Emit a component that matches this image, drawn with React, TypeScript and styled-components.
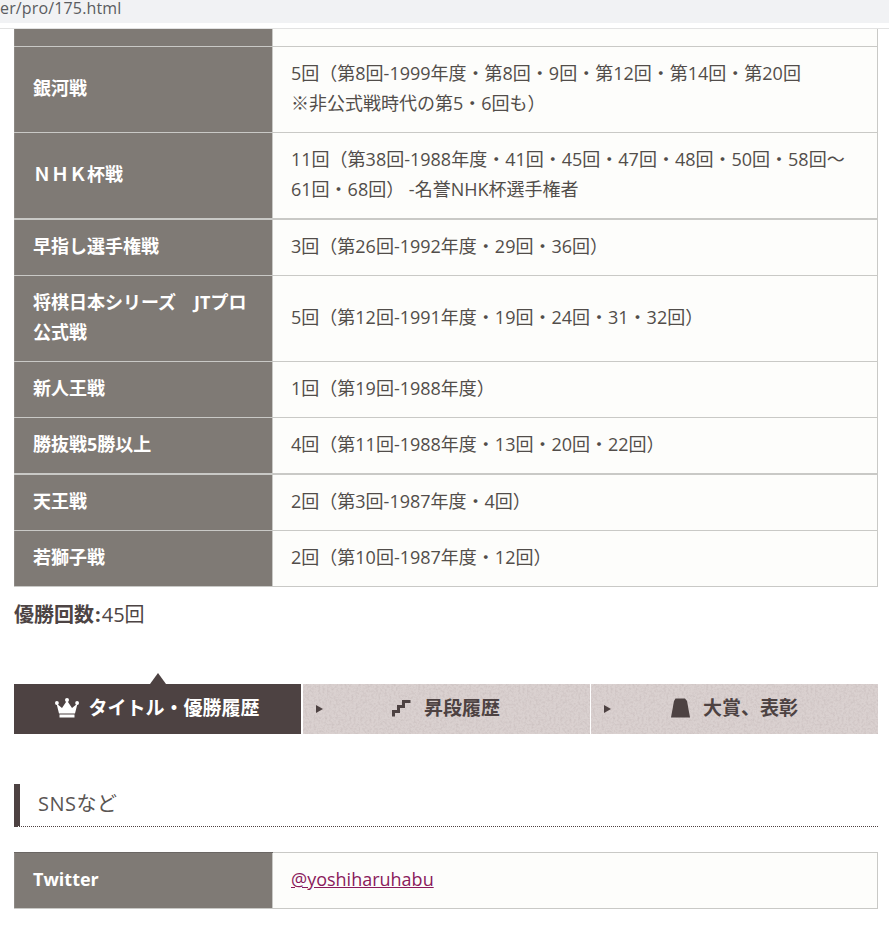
import React from "react";
import styled, { createGlobalStyle } from "styled-components";

const Global = createGlobalStyle`
  html, body { margin: 0; padding: 0; background: #fff; }
  body {
    font-family: "Open Sans", "Noto Sans CJK JP", sans-serif;
    color: #4d4444;
    overflow: hidden;
  }
`;

const Page = styled.div`
  width: 892px;
  height: 932px;
  overflow: hidden;
`;

const AddressBar = styled.div`
  width: 889px;
  height: 23px;
  background: #f1f2f4;
  color: #5a5c60;
  font-family: "Open Sans", sans-serif;
  font-size: 16px;
  letter-spacing: 0.15px;
  line-height: 16px;
  white-space: nowrap;
  margin-bottom: 5px;
`;

const Content = styled.main`
  width: 889px;
  box-sizing: border-box;
  border-top: 1px solid #e2e2e2;
  padding: 0 11px 0 14px;
`;

const Table = styled.table`
  width: 864px;
  border-collapse: collapse;
  table-layout: fixed;
  font-size: 18px;
  line-height: 30px;
`;

const Row = styled.tr<{ $thick?: boolean }>`
  & > th, & > td {
    border-top: ${(p) => (p.$thick ? "2px" : "1px")} solid #c9c9c6;
  }
`;

const Head = styled.th`
  width: 258px;
  box-sizing: border-box;
  background: #7f7a75;
  color: #fff;
  font-weight: 700;
  text-align: left;
  padding: 11px 18px 14px;
  border-left: 1px solid #8d8985;
  border-bottom: 1px solid #c9c9c6;
`;

const Cell = styled.td`
  background: #fdfdfb;
  color: #524d4a;
  padding: 11px 18px 14px;
  border-right: 1px solid #c9c9c6;
  border-bottom: 1px solid #c9c9c6;
  border-left: 1px solid #c9c9c6;
`;

const StubHead = styled(Head)`
  padding: 0;
  height: 17px;
  line-height: 1px;
`;

const StubCell = styled(Cell)`
  padding: 0;
  height: 17px;
  line-height: 1px;
`;

const Total = styled.p`
  margin: 13px 0 0;
  font-size: 20px;
  line-height: 30px;
  color: #4d4444;
`;

const TotalLabel = styled.strong`
  font-weight: 700;
`;

const TotalColon = styled.span`
  font-weight: 700;
  margin: 0 1px;
`;

const Tabs = styled.nav`
  display: grid;
  grid-template-columns: 287px 287px 287px;
  column-gap: 1.5px;
  margin-top: 54px;
  height: 50px;
  width: 864px;
`;

const texture = `url("data:image/svg+xml,%3Csvg xmlns='http://www.w3.org/2000/svg' width='200' height='200'%3E%3Cfilter id='n'%3E%3CfeTurbulence type='fractalNoise' baseFrequency='0.45' numOctaves='3' seed='4'/%3E%3CfeColorMatrix values='0 0 0 0 0.45 0 0 0 0 0.38 0 0 0 0 0.38 0 0 0 0.7 -0.27'/%3E%3C/filter%3E%3Crect width='200' height='200' filter='url(%23n)'/%3E%3C/svg%3E")`;

const Tab = styled.a<{ $active?: boolean }>`
  position: relative;
  display: flex;
  align-items: center;
  justify-content: center;
  gap: ${(p) => (p.$active ? "9px" : "13px")};
  font-size: 19px;
  font-weight: 700;
  line-height: 46px;
  padding-bottom: 2px;
  box-sizing: border-box;
  color: ${(p) => (p.$active ? "#fff" : "#4d4242")};
  background-color: ${(p) => (p.$active ? "#4d4242" : "#dad1d0")};
  background-image: ${(p) => (p.$active ? "none" : texture)};
`;

const ActivePointer = styled.span`
  position: absolute;
  top: -11px;
  left: 50%;
  margin-left: -8px;
  width: 0;
  height: 0;
  border-left: 8px solid transparent;
  border-right: 8px solid transparent;
  border-bottom: 11px solid #4d4242;
`;

const TabArrow = styled.span`
  position: absolute;
  left: 13px;
  top: 21px;
  width: 0;
  height: 0;
  border-top: 4px solid transparent;
  border-bottom: 4px solid transparent;
  border-left: 7px solid #4d4242;
`;

const SectionTitle = styled.h2`
  margin: 50px 0 0;
  height: 43px;
  box-sizing: border-box;
  width: 864px;
  border-left: 6px solid #4d4242;
  border-bottom: 1px dotted #4d4242;
  padding-left: 18px;
  font-size: 20px;
  letter-spacing: 0.5px;
  line-height: 39px;
  font-weight: 400;
  color: #5a5553;
`;

const SnsTable = styled(Table)`
  margin-top: 25px;
`;

const TwitterHead = styled(Head)`
  border-top: 1px solid #6a6663;
  font-family: "Open Sans", sans-serif;
`;

const TwitterCell = styled(Cell)`
  border-top: 1px solid #c9c9c6;
`;

const Link = styled.a`
  color: #8a1a5c;
  text-decoration: underline;
`;

const Crown = () => (
  <svg width="24" height="20" viewBox="0 0 24 20" aria-hidden="true">
    <path
      fill="currentColor"
      d="M1.500 5.500 7 10 12 2.500 17 10l5.500-4.500L20 15.500H4z M4.500 16.500h15v3h-15z"
    />
    <circle cx="1.900" cy="5" r="1.900" fill="currentColor" />
    <circle cx="12" cy="2" r="2" fill="currentColor" />
    <circle cx="22.100" cy="5" r="1.900" fill="currentColor" />
  </svg>
);

const Stairs = () => (
  <svg width="19" height="18" viewBox="0 0 19 18" aria-hidden="true">
    <path
      fill="currentColor"
      d="M0 17.500V11h5V6h5V1h8.500v3H13v5H8v5H3v3.500z"
    />
  </svg>
);

const Piece = () => (
  <svg width="19" height="20" viewBox="0 0 19 20" aria-hidden="true">
    <path fill="currentColor" d="M4.500 0.500 14 0.500 16 3 19 19.500H0L3 3z" />
  </svg>
);

const rows: { head: React.ReactNode; body: React.ReactNode; thick?: boolean }[] = [
  {
    head: "銀河戦",
    body: (
      <>
        5回（第8回-1999年度・第8回・9回・第12回・第14回・第20回
        <br />
        ※非公式戦時代の第5・6回も）
      </>
    ),
  },
  {
    head: "ＮＨＫ杯戦",
    body: "11回（第38回-1988年度・41回・45回・47回・48回・50回・58回～61回・68回） -名誉NHK杯選手権者",
  },
  { head: "早指し選手権戦", body: "3回（第26回-1992年度・29回・36回）", thick: true },
  { head: "将棋日本シリーズ　JTプロ公式戦", body: "5回（第12回-1991年度・19回・24回・31・32回）" },
  { head: "新人王戦", body: "1回（第19回-1988年度）" },
  { head: "勝抜戦5勝以上", body: "4回（第11回-1988年度・13回・20回・22回）" },
  { head: "天王戦", body: "2回（第3回-1987年度・4回）", thick: true },
  { head: "若獅子戦", body: "2回（第10回-1987年度・12回）" },
];

export default function App() {
  return (
    <Page>
      <Global />
      <AddressBar>er/pro/175.html</AddressBar>
      <Content>
        <Table>
          <tbody>
            <tr>
              <StubHead />
              <StubCell />
            </tr>
            {rows.map((r, i) => (
              <Row key={i} $thick={r.thick}>
                <Head>{r.head}</Head>
                <Cell>{r.body}</Cell>
              </Row>
            ))}
          </tbody>
        </Table>
        <Total>
          <TotalLabel>優勝回数</TotalLabel>
          <TotalColon>:</TotalColon>45回
        </Total>
        <Tabs>
          <Tab $active>
            <ActivePointer />
            <Crown />
            タイトル・優勝履歴
          </Tab>
          <Tab>
            <TabArrow />
            <Stairs />
            昇段履歴
          </Tab>
          <Tab>
            <TabArrow />
            <Piece />
            大賞、表彰
          </Tab>
        </Tabs>
        <SectionTitle>SNSなど</SectionTitle>
        <SnsTable>
          <tbody>
            <tr>
              <TwitterHead>Twitter</TwitterHead>
              <TwitterCell>
                <Link href="#">@yoshiharuhabu</Link>
              </TwitterCell>
            </tr>
          </tbody>
        </SnsTable>
      </Content>
    </Page>
  );
}
